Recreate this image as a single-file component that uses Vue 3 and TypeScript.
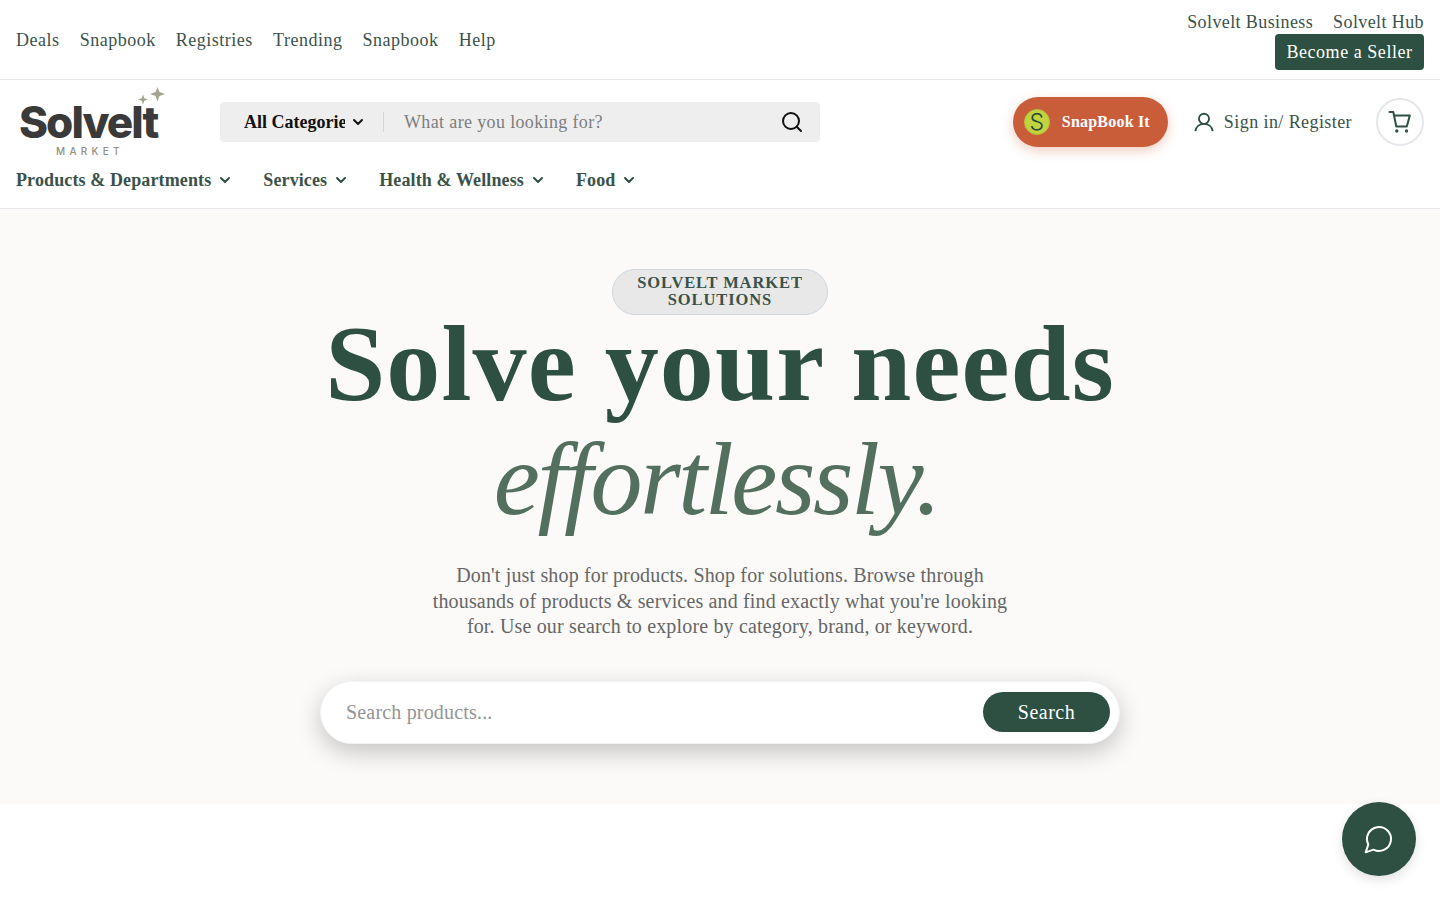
<template>
  <div class="page">
    <header class="site-header">
      <div class="topbar">
        <nav class="top-links">
          <a v-for="(link, i) in topLinks" :key="i" class="top-link">{{ link }}</a>
        </nav>
        <div class="top-right">
          <div class="biz-links">
            <a class="top-link biz-link">Solvelt Business</a>
            <a class="top-link biz-link">Solvelt Hub</a>
          </div>
          <button class="seller-btn" type="button">Become a Seller</button>
        </div>
      </div>

      <div class="mainbar">
        <div class="logo">
          <svg class="logo-stars" viewBox="0 0 28 19" aria-hidden="true">
            <path d="M19.500 0 L21.400 5.100 L27 7 L21.400 8.900 L19.500 14.500 L17.600 8.900 L12 7 L17.600 5.100 Z" />
            <path d="M5 7.500 L6.300 11.200 L10 12.500 L6.300 13.800 L5 17.500 L3.700 13.800 L0 12.500 L3.700 11.200 Z" />
          </svg>
          <span class="logo-word">Solvelt</span>
          <span class="logo-sub">MARKET</span>
        </div>

        <div class="searchbar">
          <div class="cat-select">
            <span class="cat-label">All Categories</span>
            <svg class="chev chev-dark" viewBox="0 0 24 24"><path d="m6 9 6 6 6-6" /></svg>
          </div>
          <span class="divider"></span>
          <span class="search-placeholder">What are you looking for?</span>
          <svg class="search-icon" viewBox="0 0 24 24">
            <circle cx="11" cy="11" r="8" />
            <path d="m21 21-4.300-4.300" />
          </svg>
        </div>

        <div class="actions">
          <button class="snap-btn" type="button">
            <span class="snap-badge">S</span>
            <span class="snap-text">SnapBook It</span>
          </button>
          <a class="signin">
            <svg class="user-icon" viewBox="0 0 24 24">
              <circle cx="12" cy="8.500" r="5.500" />
              <path d="M2.500 22c.6-4.800 4.500-8 9.500-8s8.900 3.200 9.500 8" />
            </svg>
            <span>Sign in/ Register</span>
          </a>
          <button class="cart-btn" type="button" aria-label="Cart">
            <svg viewBox="0 0 24 24">
              <path d="M1.500 2h3.800l3 14.500h10.500l3-11H6" />
              <circle cx="8.800" cy="21" r=".7" />
              <circle cx="18.500" cy="21" r=".7" />
            </svg>
          </button>
        </div>
      </div>

      <nav class="catnav">
        <a v-for="item in navItems" :key="item" class="catnav-item">
          {{ item }}
          <svg class="chev" viewBox="0 0 24 24"><path d="m6 9 6 6 6-6" /></svg>
        </a>
      </nav>
    </header>

    <section class="hero">
      <span class="hero-badge">SOLVELT MARKET SOLUTIONS</span>
      <h1 class="hero-title">
        <span class="title-main">Solve your needs</span>
        <em class="title-accent">effortlessly.</em>
      </h1>
      <p class="hero-copy">
        Don't just shop for products. Shop for solutions. Browse through thousands of products &amp; services and find
        exactly what you're looking for. Use our search to explore by category, brand, or keyword.
      </p>
      <div class="hero-search">
        <span class="hero-placeholder">Search products...</span>
        <button class="hero-search-btn" type="button">Search</button>
      </div>
    </section>

    <button class="chat-btn" type="button" aria-label="Chat">
      <svg viewBox="0 0 24 24"><path d="M7.900 20A9 9 0 1 0 4 16.100L2 22Z" /></svg>
    </button>
  </div>
</template>

<script setup lang="ts">
const topLinks: string[] = ["Deals", "Snapbook", "Registries", "Trending", "Snapbook", "Help"];
const navItems: string[] = ["Products & Departments", "Services", "Health & Wellness", "Food"];
</script>

<style>
html,
body {
  margin: 0;
  background: #fff;
}
</style>

<style scoped>
.page {
  --green: #2d5042;
  --text: #3b524a;
  font-family: "Liberation Serif", "Times New Roman", serif;
  color: var(--text);
  height: 900px;
  overflow: hidden;
}
.topbar {
  height: 80px;
  box-sizing: border-box;
  padding: 0 16px;
  border-bottom: 1px solid #e5e7eb;
  display: flex;
  justify-content: space-between;
  align-items: center;
}
.top-links {
  display: flex;
  gap: 20.200px;
  padding-top: 1px;
}
.top-link {
  font-size: 18px;
  letter-spacing: 0.5px;
  line-height: 24px;
}
.biz-link {
  letter-spacing: 0.4px;
}
.top-right {
  display: flex;
  flex-direction: column;
  align-items: flex-end;
  padding-top: 2px;
}
.biz-links {
  display: flex;
  gap: 20px;
  height: 22px;
  margin-bottom: 1px;
  align-items: center;
}
.seller-btn {
  width: 149px;
  height: 36px;
  border: 0;
  border-radius: 4px;
  background: var(--green);
  color: #fff;
  font: inherit;
  font-size: 18px;
  letter-spacing: 0.55px;
  padding: 0;
}
.mainbar {
  height: 84px;
  padding: 0 16px 0 19px;
  display: flex;
  align-items: center;
}
.logo {
  width: 201px;
  flex: none;
  display: flex;
  flex-direction: column;
  position: relative;
  height: 72px;
  font-family: Inter, "Liberation Sans", sans-serif;
}
.logo-stars {
  position: absolute;
  left: 119px;
  top: 1px;
  width: 28px;
  height: 19px;
  fill: #a3a38f;
}
.logo-word {
  font-size: 44px;
  font-weight: 800;
  letter-spacing: -1.950px;
  color: #3a3a3a;
  line-height: 38px;
  margin-top: 17px;
}
.logo-sub {
  font-size: 10px;
  font-weight: 500;
  letter-spacing: 4.300px;
  color: #8f8f83;
  padding-left: 37px;
  line-height: 12px;
  margin-top: 4px;
}
.searchbar {
  width: 600px;
  height: 40px;
  flex: none;
  box-sizing: border-box;
  border-radius: 4px;
  background: #eeeeee;
  display: flex;
  align-items: center;
  padding-left: 24px;
}
.cat-select {
  display: flex;
  align-items: center;
  gap: 5px;
}
.cat-label {
  display: block;
  width: 101px;
  overflow: hidden;
  white-space: nowrap;
  font-size: 18px;
  font-weight: 700;
  color: #111;
}
.divider {
  width: 1px;
  height: 20px;
  background: #d5d5d5;
  margin: 0 20px 0 17px;
}
.search-placeholder {
  flex: 1;
  font-size: 18px;
  letter-spacing: 0.360px;
  color: #7d7d7d;
}
.search-icon {
  width: 24px;
  height: 24px;
  margin-right: 16px;
  fill: none;
  stroke: #111;
  stroke-width: 2;
  stroke-linecap: round;
}
.actions {
  margin-left: auto;
  display: flex;
  align-items: center;
}
.snap-btn {
  width: 155px;
  height: 50px;
  border: 0;
  border-radius: 25px;
  background: #c95c39;
  box-shadow: 0 4px 12px rgba(201, 92, 57, 0.3);
  display: flex;
  align-items: center;
  padding: 0 0 0 11px;
  color: #fff;
  font: inherit;
}
.snap-badge {
  width: 26px;
  height: 26px;
  box-sizing: border-box;
  border: 1px solid #b4bf3c;
  border-radius: 50%;
  background: #c3d23f;
  color: #1f4a35;
  font-family: Inter, "Liberation Sans", sans-serif;
  font-size: 23px;
  font-weight: 300;
  line-height: 24px;
  text-align: center;
}
.snap-text {
  margin-left: 12px;
  font-size: 16px;
  font-weight: 700;
  letter-spacing: 0.200px;
}
.signin {
  margin-left: 25px;
  display: flex;
  align-items: center;
  gap: 9px;
  font-size: 18px;
  letter-spacing: 0.420px;
}
.user-icon {
  width: 22px;
  height: 22px;
  fill: none;
  stroke: var(--green);
  stroke-width: 2;
}
.cart-btn {
  margin-left: 24px;
  width: 48px;
  height: 48px;
  box-sizing: border-box;
  border: 2px solid #e5e7eb;
  border-radius: 50%;
  background: #fff;
  padding: 0;
  display: flex;
  align-items: center;
  justify-content: center;
}
.cart-btn svg {
  width: 24px;
  height: 24px;
  fill: none;
  stroke: var(--green);
  stroke-width: 2;
  stroke-linejoin: round;
  stroke-linecap: round;
}
.catnav {
  height: 45px;
  box-sizing: border-box;
  padding: 0 16px 12px;
  border-bottom: 1px solid #e5e7eb;
  display: flex;
  align-items: center;
  gap: 30px;
}
.catnav-item {
  display: flex;
  align-items: center;
  gap: 6px;
  font-size: 18px;
  font-weight: 700;
  letter-spacing: 0.120px;
}
.chev {
  width: 16px;
  height: 16px;
  fill: none;
  stroke: var(--green);
  stroke-width: 3;
  stroke-linecap: round;
  stroke-linejoin: round;
}
.chev-dark {
  stroke: #111;
}
.hero {
  height: 595px;
  box-sizing: border-box;
  background: #fbfaf8;
  padding-top: 60px;
  display: flex;
  flex-direction: column;
  align-items: center;
}
.hero-badge {
  box-sizing: border-box;
  width: 216px;
  height: 46px;
  padding: 3px 16px 5px;
  border: 1px solid #d1d5db;
  border-radius: 23px;
  background: #e8e8e8;
  text-align: center;
  font-size: 16.500px;
  font-weight: 700;
  letter-spacing: 0.900px;
  line-height: 17px;
  display: flex;
  align-items: center;
  justify-content: center;
}
.hero-title {
  margin: 0;
  display: flex;
  flex-direction: column;
  align-items: center;
  font-weight: 700;
  color: var(--green);
  height: 221px;
}
.title-main {
  font-size: 108px;
  line-height: 97px;
  letter-spacing: 1.100px;
}
.title-accent {
  margin: 9px 7px 0 0;
  font-size: 104px;
  line-height: 115px;
  font-weight: 400;
  color: #53705f;
  letter-spacing: -2.400px;
}
.hero-copy {
  margin: 27px 0 0;
  width: 592px;
  text-align: center;
  font-size: 20px;
  line-height: 25.600px;
  letter-spacing: 0.160px;
  color: #666;
}
.hero-search {
  margin-top: 41px;
  width: 800px;
  height: 63px;
  box-sizing: border-box;
  border: 1px solid #f3f3f3;
  border-radius: 32px;
  background: #fff;
  box-shadow: 0 8px 24px rgba(0, 0, 0, 0.22);
  display: flex;
  align-items: center;
  justify-content: space-between;
  padding: 0 9px 0 25px;
}
.hero-placeholder {
  font-size: 20px;
  letter-spacing: 0.180px;
  color: #949494;
}
.hero-search-btn {
  width: 127px;
  height: 40px;
  border: 0;
  border-radius: 20px;
  background: var(--green);
  color: #fff;
  font: inherit;
  font-size: 20px;
  letter-spacing: 0.500px;
  padding: 0;
}
.chat-btn {
  position: fixed;
  right: 24px;
  bottom: 24px;
  width: 74px;
  height: 74px;
  border: 0;
  border-radius: 50%;
  background: var(--green);
  box-shadow: 0 4px 12px rgba(0, 0, 0, 0.12);
  display: flex;
  align-items: center;
  justify-content: center;
  padding: 0;
}
.chat-btn svg {
  width: 32px;
  height: 32px;
  fill: none;
  stroke: #fff;
  stroke-width: 1.500;
  stroke-linejoin: round;
  stroke-linecap: round;
}
</style>
